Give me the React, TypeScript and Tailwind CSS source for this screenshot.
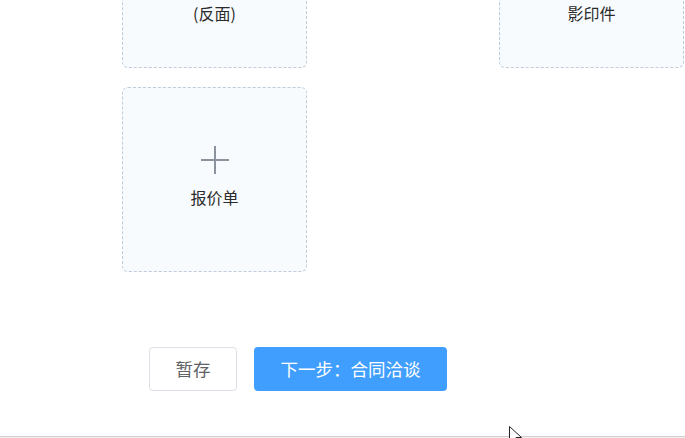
import React from 'react';

const FONT = "font-['Noto_Sans_CJK_SC','Noto_Sans',sans-serif]";

function PlusIcon() {
  return (
    <svg width="28" height="28" viewBox="0 0 28 28" className="shrink-0">
      <path d="M0 14H28M14 0V28" stroke="#8c939d" strokeWidth="2" />
    </svg>
  );
}

function UploadCard({ lines }: { lines: string[] }) {
  const multi = lines.length > 1;
  return (
    <div className="flex h-[185px] w-[185px] flex-col items-center rounded-[6px] border border-dashed border-[#c0ccda] bg-[#f8fbfd] pt-[58px]">
      <PlusIcon />
      <div
        className={`${multi ? 'mt-[8px]' : 'mt-[13px]'} flex flex-col items-center gap-[4px] text-[16px] leading-[21px] text-[#2b2b2b]`}
      >
        {lines.map(l => (
          <span key={l}>{l}</span>
        ))}
      </div>
    </div>
  );
}

export default function App() {
  return (
    <div className={`relative flex h-[438px] w-[685px] flex-col overflow-hidden bg-white ${FONT}`}>
      <div className="mt-[-117px] flex flex-col gap-[19px] pl-[122px]">
        <div className="flex gap-[192px]">
          <UploadCard lines={['身份证', '(反面)']} />
          <UploadCard lines={['营业执照', '影印件']} />
        </div>
        <UploadCard lines={['报价单']} />
      </div>

      <div className="ml-[149px] mt-[75px] flex gap-[17px]">
        <button className="h-[44px] w-[88px] rounded-[4px] border border-[#dcdfe6] bg-white text-[17.5px] text-[#606266]">
          暂存
        </button>
        <button className="h-[44px] w-[193px] rounded-[4px] bg-[#409eff] text-[17.5px] text-white">
          下一步：合同洽谈
        </button>
      </div>

      <div className="mt-auto h-[2px] border-t border-[#cfcfcf] bg-[#f0f0f0]" />

      {/* mouse pointer */}
      <svg width="14" height="20" viewBox="0 0 14 20" className="absolute left-[509px] top-[426px]">
        <path d="M0.5 0.5V16L4.5 12.5L7 18.5L9.5 17.5L7 11.5H12.5Z" fill="white" stroke="#222" strokeWidth="1" />
      </svg>
    </div>
  );
}
